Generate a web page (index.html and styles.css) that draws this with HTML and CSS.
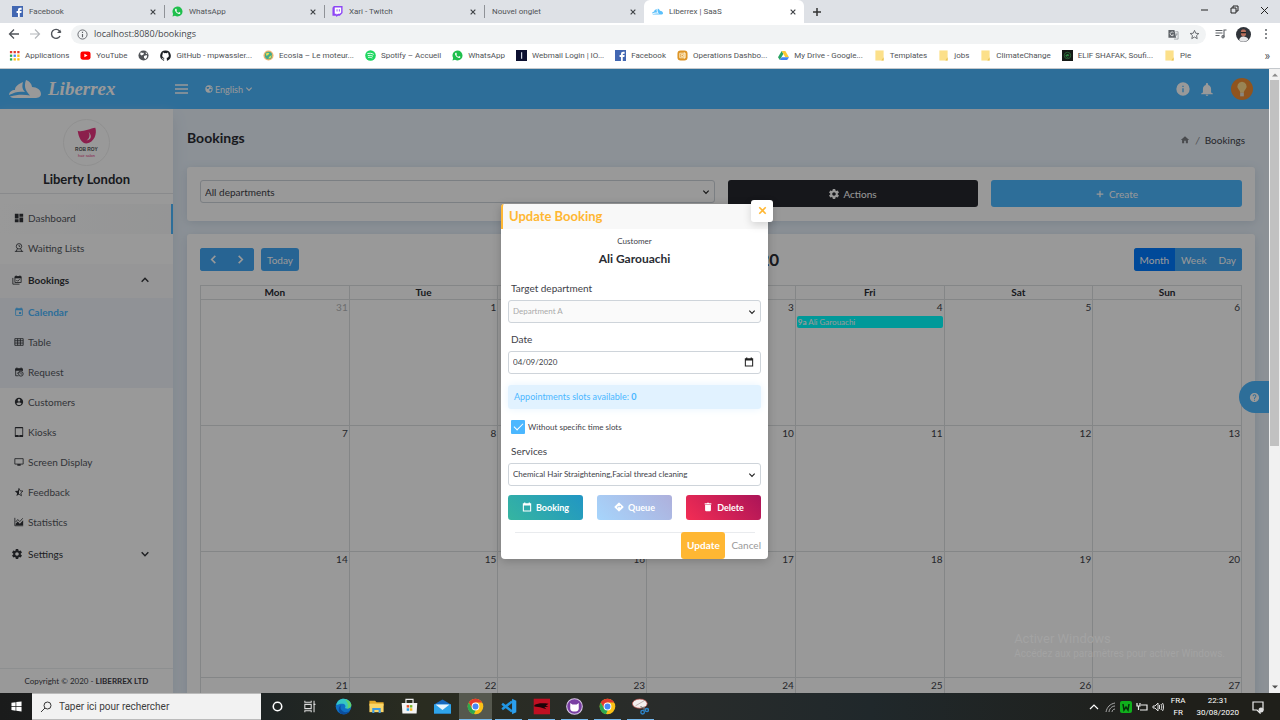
FILE: index.html
```html
<!DOCTYPE html>
<html lang="en">
<head>
<meta charset="utf-8">
<title>Liberrex | SaaS</title>
<link rel="stylesheet" href="styles.css">
</head>
<body>
<svg class="sprite" aria-hidden="true">
  <symbol id="i-x" viewBox="0 0 24 24"><path d="M5 5l14 14M19 5L5 19" fill="none" stroke="currentColor" stroke-width="3.500"/></symbol>
  <symbol id="i-facebook" viewBox="0 0 24 24"><path fill="#4267b2" d="M0 0h24v24H0z"/><path fill="#fff" d="M13 24v-9h-3v-4h3V9c0-3.500 2-5 5-5h3v4h-2c-1.500 0-2 .5-2 1.500V11h4l-.6 4H17v9z"/></symbol>
  <symbol id="i-whatsapp" viewBox="0 0 24 24"><path fill="#1fbf4c" d="M12 1a11 11 0 0 1 0 22c-2 0-4-.5-5.500-1.500L1 23l1.500-5.500A11 11 0 0 1 12 1z"/><path fill="#fff" d="M8 6c-2 1.500-1.600 4 .2 6.700 2 3 5.200 5.200 8 4.800 1.500-.3 2.300-1.500 2.100-2.600l-3-1.600-1.500 1.700c-2-.7-3.600-2.300-4.300-4l1.200-1.600L9.500 6z"/></symbol>
  <symbol id="i-cloud" viewBox="0 0 32 20"><path fill="currentColor" d="M0 16c0-3 3-5 6-5 0-4 4-6 8-8-1 4-1 7 2 10-6-1-10 0-16 3zM17 1c3 1 6 4 6 7 5 0 9 3 9 7 0 3-3 4-6 4H6c-2 0-4-.500-5-1.500 7-2 14-2 20-1-3-3-7-8-4-15.500z"/></symbol>
  <symbol id="i-folder" viewBox="0 0 24 24"><path fill="#fce08a" d="M3 1h18v22H3z"/><path fill="#e9c354" d="M16 23l5-7v7z"/></symbol>
  <symbol id="i-globe" viewBox="0 0 24 24"><circle cx="12" cy="12" r="11" fill="currentColor"/><path class="cut" d="M5 6c3-1 5 1 8 0l-1 4-4 2-3-2zM13 13l6-2 1 4-4 5-3-3zM17 4l4 5-4-1z"/></symbol>
  <symbol id="i-info" viewBox="0 0 24 24"><path fill="currentColor" d="M12 2a10 10 0 1 0 0 20 10 10 0 0 0 0-20zm1 15h-2v-6h2zm0-8h-2V7h2z"/></symbol>
  <symbol id="i-chrome" viewBox="0 0 24 24"><circle cx="12" cy="12" r="11" fill="#fbc116"/><path fill="#e33b2e" d="M2.500 6.500A11 11 0 0 1 21.500 6.500H12l-5 8z"/><path fill="#2da94f" d="M2.500 6.500L7.300 15l5.200 2-2.700 6A11 11 0 0 1 2.500 6.500z"/><circle cx="12" cy="12" r="5.500" fill="#fff"/><circle cx="12" cy="12" r="4.200" fill="#4687f4"/></symbol>
  <symbol id="i-chev" viewBox="0 0 24 24"><path d="M4 8l8 8 8-8" fill="none" stroke="currentColor" stroke-width="3.500"/></symbol>
  <symbol id="i-dashboard" viewBox="0 0 24 24"><path fill="currentColor" d="M2 13h9V2H2v11zm0 9h9v-7H2v7zm11 0h9V11h-9v11zm0-20v7h9V2h-9z"/></symbol>
  <symbol id="i-waiting" viewBox="0 0 24 24"><g fill="none" stroke="currentColor" stroke-width="2"><circle cx="12" cy="8" r="6.500"/><path d="M12 5v3h3M8 14l-3 7M16 14l3 7M2 20h20"/></g></symbol>
  <symbol id="i-books" viewBox="0 0 24 24"><path d="M7 4h15v14H7zM2 7v15h16M10 1v3M19 1v3M10.500 12l3 3 5-5" fill="none" stroke="currentColor" stroke-width="2"/><path fill="currentColor" d="M7 3h15v5H7z"/></symbol>
  <symbol id="i-event" viewBox="0 0 24 24"><path fill="currentColor" d="M17 12h-5v5h5v-5zM16 1v2H8V1H6v2H5c-1.110 0-1.990.9-1.990 2L3 19c0 1.100.89 2 2 2h14c1.100 0 2-.9 2-2V5c0-1.100-.9-2-2-2h-1V1h-2zm3 18H5V8h14v11z"/></symbol>
  <symbol id="i-table" viewBox="0 0 24 24"><path d="M2 4h20v16H2zM2 9h20M2 14.500h20M8.700 4v16M15.300 4v16" fill="none" stroke="currentColor" stroke-width="2"/></symbol>
  <symbol id="i-request" viewBox="0 0 24 24"><path d="M11 21H4V4h16v6M7 1v4M17 1v4M7 16l7-6" fill="none" stroke="currentColor" stroke-width="2"/><path fill="currentColor" d="M3 4h18v5H3z"/><circle cx="16.500" cy="16.500" r="5.500" fill="none" stroke="currentColor" stroke-width="2"/><path d="M16.500 13v4h3" fill="none" stroke="currentColor" stroke-width="1.500"/></symbol>
  <symbol id="i-user" viewBox="0 0 24 24"><path fill="currentColor" d="M12 2C6.480 2 2 6.480 2 12s4.480 10 10 10 10-4.480 10-10S17.520 2 12 2zm0 3c1.660 0 3 1.340 3 3s-1.340 3-3 3-3-1.340-3-3 1.340-3 3-3zm0 14.200c-2.500 0-4.710-1.280-6-3.220.03-1.990 4-3.080 6-3.080 1.990 0 5.970 1.090 6 3.080-1.290 1.940-3.500 3.220-6 3.220z"/></symbol>
  <symbol id="i-tablet" viewBox="0 0 24 24"><path fill="currentColor" fill-rule="evenodd" d="M4 0h16a2 2 0 0 1 2 2v20a2 2 0 0 1-2 2H4a2 2 0 0 1-2-2V2a2 2 0 0 1 2-2zm0 3v16h16V3zm6.500 17.500v1.500h3v-1.500z"/></symbol>
  <symbol id="i-screen" viewBox="0 0 24 24"><path d="M2 4h20v13H2z" fill="none" stroke="currentColor" stroke-width="2"/><path fill="currentColor" d="M8 17h8v4H8z"/></symbol>
  <symbol id="i-star" viewBox="0 0 24 24"><path d="M12 3l2.700 6.200 6.800.6-5.100 4.500 1.500 6.700-5.900-3.500" fill="none" stroke="currentColor" stroke-width="2"/><path fill="currentColor" d="M12 2v16l-6.200 3.700 1.700-7L2 9.800l7.200-.6z"/></symbol>
  <symbol id="i-stats" viewBox="0 0 24 24"><path d="M2 2v19h20M4 12l5-6 5 5 7-8" fill="none" stroke="currentColor" stroke-width="2"/><path fill="currentColor" d="M4 20v-4l5-5 5 5 8-8v12z"/></symbol>
  <symbol id="i-gear" viewBox="2 2 20 20"><path fill="currentColor" d="M19.430 12.980c.04-.32.07-.64.07-.98s-.03-.66-.07-.98l2.110-1.650c.19-.15.24-.42.12-.64l-2-3.460c-.12-.22-.39-.3-.61-.22l-2.490 1c-.52-.4-1.080-.73-1.690-.98l-.38-2.650C14.460 2.180 14.250 2 14 2h-4c-.25 0-.46.18-.49.42l-.38 2.650c-.61.25-1.170.59-1.690.98l-2.490-1c-.23-.09-.49 0-.61.22l-2 3.460c-.13.22-.07.49.12.64l2.110 1.650c-.04.32-.07.65-.07.98s.03.66.07.98l-2.110 1.650c-.19.15-.24.42-.12.64l2 3.460c.12.22.39.3.61.22l2.490-1c.52.4 1.080.73 1.690.98l.38 2.650c.03.24.24.42.49.42h4c.25 0 .46-.18.49-.42l.38-2.650c.61-.25 1.170-.59 1.690-.98l2.490 1c.23.09.49 0 .61-.22l2-3.460c.12-.22.07-.49-.12-.64l-2.110-1.650zM12 15.500c-1.930 0-3.500-1.570-3.500-3.500s1.570-3.500 3.500-3.500 3.500 1.570 3.500 3.500-1.570 3.500-3.500 3.500z"/></symbol>
  <symbol id="i-plus" viewBox="0 0 24 24"><path d="M12 4v16M4 12h16" fill="none" stroke="currentColor" stroke-width="3"/></symbol>
  <symbol id="i-home" viewBox="0 0 24 24"><path fill="currentColor" d="M10 20v-6h4v6h5v-8h3L12 3 2 12h3v8z"/></symbol>
  <symbol id="i-bell" viewBox="0 0 24 24"><path fill="currentColor" d="M12 23c1.300 0 2.300-.9 2.300-2H9.700c0 1.100 1 2 2.300 2zm7-6v-6c0-3.400-2-6-5-6.800V3a2 2 0 0 0-4 0v1.200C7 5 5 7.600 5 11v6l-3 2v1h20v-1z"/></symbol>
  <symbol id="i-help" viewBox="0 0 24 24"><path fill="currentColor" d="M12 2C6.480 2 2 6.480 2 12s4.480 10 10 10 10-4.480 10-10S17.520 2 12 2zm1 17h-2v-2h2v2zm2.070-7.750l-.9.920C13.450 12.900 13 13.500 13 15h-2v-.5c0-1.100.45-2.100 1.170-2.830l1.240-1.260c.37-.36.59-.86.59-1.410 0-1.100-.9-2-2-2s-2 .9-2 2H8c0-2.210 1.790-4 4-4s4 1.790 4 4c0 .88-.36 1.680-.93 2.250z"/></symbol>
  <symbol id="i-cal" viewBox="0 0 24 24"><path fill="currentColor" fill-rule="evenodd" d="M5 1h3v2h8V1h3v2h3v20H2V3h3zM4.500 8.500v12h15v-12z"/></symbol>
  <symbol id="i-queue" viewBox="0 0 24 24"><path fill="currentColor" d="M22.400 10.900L13.100 1.600a1.500 1.500 0 0 0-2.200 0l-9.300 9.300a1.500 1.500 0 0 0 0 2.200l9.300 9.300a1.500 1.500 0 0 0 2.200 0l9.300-9.300a1.500 1.500 0 0 0 0-2.200zM14 14.500V12h-4v3H8v-4a1 1 0 0 1 1-1h5V7.500l3.500 3.500z"/></symbol>
  <symbol id="i-trash" viewBox="0 0 24 24"><path fill="currentColor" d="M5 7h14v13a2 2 0 0 1-2 2H7a2 2 0 0 1-2-2zM4 3h5l1-1h4l1 1h5v3H4z"/></symbol>
</svg>

<header class="browser">
  <div class="tabs">
    <div class="tab"><svg class="ic11"><use href="#i-facebook"/></svg><span>Facebook</span><button aria-label="Close tab"><svg><use href="#i-x"/></svg></button></div>
    <div class="tab"><svg class="ic11"><use href="#i-whatsapp"/></svg><span>WhatsApp</span><button aria-label="Close tab"><svg><use href="#i-x"/></svg></button></div>
    <div class="tab"><svg class="ic11" viewBox="0 0 24 24"><path fill="#8d45f5" d="M4 0h19v15l-6 6h-4l-4 3v-3H1V4z"/><path fill="#fff" d="M6 3h14v11l-3 3h-4l-3 2v-2H6z"/><path stroke="#8d45f5" stroke-width="2" d="M11 7v5M16 7v5"/></svg><span>Xari - Twitch</span><button aria-label="Close tab"><svg><use href="#i-x"/></svg></button></div>
    <div class="tab last"><span>Nouvel onglet</span><button aria-label="Close tab"><svg><use href="#i-x"/></svg></button></div>
    <div class="tab active"><svg class="ic11 sky"><use href="#i-cloud"/></svg><span>Liberrex | SaaS</span><button aria-label="Close tab"><svg><use href="#i-x"/></svg></button></div>
    <button class="newtab" aria-label="New tab"><svg><use href="#i-plus"/></svg></button>
    <div class="winbtns">
      <svg viewBox="0 0 12 12"><path d="M3 6h7" stroke="#222" stroke-width="1"/></svg>
      <svg viewBox="0 0 12 12" fill="none" stroke="#222" stroke-width="1"><path d="M3 4h5v5H3zM5 4V2h5v5H8"/></svg>
      <svg viewBox="0 0 12 12"><path d="M3 3l7 7M10 3l-7 7" stroke="#222" stroke-width="1"/></svg>
    </div>
  </div>
  <div class="address">
    <svg class="ic12" viewBox="0 0 24 24" fill="none" stroke="#50545a" stroke-width="2.600"><path d="M22 12H4M12 3l-9 9 9 9"/></svg>
    <svg class="ic12" viewBox="0 0 24 24" fill="none" stroke="#b4b7bb" stroke-width="2.400"><path d="M2 12h18M12 3l9 9-9 9"/></svg>
    <svg class="ic12" viewBox="0 0 24 24" fill="none" stroke="#50545a" stroke-width="2.800"><path d="M20 16a9 9 0 1 1-1-10l3 3"/><path fill="#50545a" d="M21 3v7h-7z" stroke="none"/></svg>
    <div class="omnibox">
      <svg class="ic11" viewBox="0 0 24 24" fill="none" stroke="#5f6368" stroke-width="2"><circle cx="12" cy="12" r="10"/><path d="M12 6v2.500M12 11v7" stroke-width="2.500"/></svg>
      <input type="text" aria-label="Address" value="localhost:8080/bookings">
      <svg class="ic11" viewBox="0 0 24 24"><path fill="#5f6368" d="M1 2h13l4 17H1z"/><path fill="none" stroke="#85898e" stroke-width="1.500" d="M16 6h6v16h-9M17 11h4M19 10c0 4-2 6-4 7"/><path fill="none" stroke="#fff" stroke-width="1.500" d="M12 8a4 4 0 1 0 0 5H9"/></svg>
      <svg class="ic11" viewBox="0 0 24 24"><path fill="none" stroke="#5f6368" stroke-width="2" d="M12 3l2.700 6.300 6.800.6-5.100 4.500 1.500 6.700L12 17.500 6.100 21l1.500-6.700-5.100-4.500 6.800-.6z"/></svg>
    </div>
    <svg class="ic12" viewBox="0 0 24 24" fill="none" stroke="#5f6368" stroke-width="2.200"><path d="M1 5h14M1 10h14M1 15h8M18 18V4h5"/><circle cx="16" cy="17.500" r="2.200"/></svg>
    <svg class="avatar" viewBox="0 0 24 24"><circle cx="12" cy="12" r="12" fill="#30343a"/><path fill="#b86f5c" d="M8 6c1-3 8-3 8 1v5c-1 4-7 4-8 0z"/><path fill="#e6e6e8" d="M5 21c1-5 4-6 7-6s6 1 8 5a12 12 0 0 1-15 1z"/><path fill="#222" d="M8 8h8v2H8z"/></svg>
    <svg class="ic12" viewBox="0 0 24 24" fill="#5f6368"><circle cx="12" cy="4" r="2"/><circle cx="12" cy="12" r="2"/><circle cx="12" cy="20" r="2"/></svg>
  </div>
  <nav class="bookmarks">
    <a href="#"><svg class="ic11" viewBox="0 0 24 24"><path fill="#e33b2e" d="M2 2h5v5H2zM10 2h5v5h-5zM18 2h5v5h-5z"/><path fill="#2da94f" d="M2 10h5v5H2z"/><path fill="#4687f4" d="M10 10h5v5h-5z"/><path fill="#fbc116" d="M18 10h5v5h-5zM10 18h5v5h-5zM18 18h5v5h-5z"/><path fill="#2da94f" d="M2 18h5v5H2z"/></svg>Applications</a>
    <a href="#"><svg class="ic11" viewBox="0 0 24 24"><rect y="3" x="1" width="22" height="18" rx="5" fill="#f00"/><path fill="#fff" d="M9.500 8v8l7-4z"/></svg>YouTube</a>
    <a href="#" aria-label="Site"><svg class="ic11"><use href="#i-globe"/></svg></a>
    <a href="#"><svg class="ic11" viewBox="0 0 24 24"><path fill="#1b1f23" d="M12 1a11.500 11.500 0 0 0-4 22.300c.6.100 1-.2 1-.6v-2c-4 .8-4.500-2-5-2.700-.3-.5-1-1.200 0-1.200 1.200 0 2 2 3 2.200.8.200 1.600 0 2-.2.100-.6.500-1.200.9-1.500-3-.5-5-1.700-5-5.500 0-1.300.5-2.400 1.200-3.200-.2-.8-.2-2 .2-3 1.500 0 2.700 1 3 1.300a12 12 0 0 1 5.400 0c.5-.4 1.700-1.300 3-1.300.5 1 .5 2.200.3 3 .7.800 1.200 1.900 1.200 3.200 0 4-2.200 5-5 5.500.6.500.8 1.400.8 2.500v3c0 .3.400.6 1 .5A11.500 11.500 0 0 0 12 1z"/></svg>GitHub - mpwassler...</a>
    <a href="#"><svg class="ic11" viewBox="0 0 24 24"><circle cx="12" cy="12" r="11" fill="#efb26d"/><circle cx="12" cy="12" r="8" fill="#42a98d"/><path fill="#e7df4e" d="M6 8c4-3 7-2 8 0l-6 5zM13 15l6-4-2 6-5 2z"/></svg>Ecosia – Le moteur...</a>
    <a href="#"><svg class="ic11" viewBox="0 0 24 24"><circle cx="12" cy="12" r="11.500" fill="#1ed760"/><path d="M5 8c5-1.500 10-1 14 1.500M6 12.500c4-1.200 8-.8 11.500 1.200M7 16.500c3-1 6-.6 9 1" fill="none" stroke="#fff" stroke-width="2"/></svg>Spotify – Accueil</a>
    <a href="#"><svg class="ic11"><use href="#i-whatsapp"/></svg>WhatsApp</a>
    <a href="#"><svg class="ic11" viewBox="0 0 24 24"><path fill="#0c1030" d="M0 0h24v24H0z"/><path fill="#d8deea" d="M11 5h2.500v14H11z"/></svg>Webmail Login | IO...</a>
    <a href="#"><svg class="ic11"><use href="#i-facebook"/></svg>Facebook</a>
    <a href="#"><svg class="ic11" viewBox="0 0 24 24"><rect x="1" y="1" width="22" height="22" rx="7" fill="#dd9426"/><path d="M6 7h12v10H6zM9 10h5v4H9zM16 5v14" fill="none" stroke="#fff3d5" stroke-width="1.800"/></svg>Operations Dashbo...</a>
    <a href="#"><svg class="ic11" viewBox="0 0 24 24"><path fill="#29a463" d="M8 2L0 16l4 6 8-14z"/><path fill="#fcc934" d="M8 2h8l8 14h-8z"/><path fill="#4285f4" d="M4 22l4-6h16l-4 6z"/></svg>My Drive - Google...</a>
    <a href="#"><svg class="ic11"><use href="#i-folder"/></svg>Templates</a>
    <a href="#"><svg class="ic11"><use href="#i-folder"/></svg>jobs</a>
    <a href="#"><svg class="ic11"><use href="#i-folder"/></svg>ClimateChange</a>
    <a href="#"><svg class="ic11" viewBox="0 0 24 24"><path fill="#151a17" d="M0 0h24v24H0z"/><circle cx="12" cy="12" r="7" fill="none" stroke="#2c6b3a" stroke-width="2"/><path d="M8 12h7a3 3 0 1 0-1 3" fill="none" stroke="#2f8c45" stroke-width="2"/></svg>ELIF SHAFAK, Soufi...</a>
    <a href="#"><svg class="ic11"><use href="#i-folder"/></svg>Pie</a>
    <button class="more" aria-label="More bookmarks">»</button>
  </nav>
</header>

<div class="viewport">
  <div class="page">
    <header class="topbar">
      <a class="brand" href="#"><svg><use href="#i-cloud"/></svg><span>Liberrex</span></a>
      <button class="burger" aria-label="Menu"><svg viewBox="0 0 13 10"><path d="M0 1h13M0 5h13M0 9h13" stroke="currentColor" stroke-width="1.400"/></svg></button>
      <button class="lang"><svg class="ic8"><use href="#i-globe"/></svg>English<svg class="ic8"><use href="#i-chev"/></svg></button>
      <div class="topright">
        <button aria-label="Information"><svg class="ic16"><use href="#i-info"/></svg></button>
        <button aria-label="Notifications"><svg class="bell"><use href="#i-bell"/></svg></button>
        <button aria-label="Account"><svg class="bulb" viewBox="0 0 24 24"><circle cx="12" cy="12" r="12" fill="#f08c32"/><path fill="#ffdc8c" d="M12 4a5 5 0 0 0-4 8c1 1.500 2 2.500 2 4h4c0-1.500 1-2.500 2-4a5 5 0 0 0-4-8z"/><path fill="#e8e0d0" d="M10 16h4v4h-4z"/></svg></button>
      </div>
    </header>
    <div class="columns">
      <aside class="sidebar">
        <div class="profile">
          <svg class="salon" viewBox="0 0 48 48"><circle cx="24" cy="24" r="23.500" fill="#fff" stroke="#efefef"/><path fill="#e8357f" d="M15 12c4 2 12-2 18-3 2 6-1 15-9 16-5 0-8-6-9-13z"/><path fill="#fff" d="M26 13c2 3 1 7-2 9 5-1 6-5 2-9z"/><text x="24" y="33" text-anchor="middle" class="salon-a">ROB ROY</text><text x="24" y="39" text-anchor="middle" class="salon-b">hair salon</text></svg>
          <h2>Liberty London</h2>
        </div>
        <nav class="menu">
          <a class="hover" href="#"><svg><use href="#i-dashboard"/></svg>Dashboard</a>
          <a href="#"><svg><use href="#i-waiting"/></svg>Waiting Lists</a>
          <button class="group open"><svg><use href="#i-books"/></svg>Bookings<svg class="arrow up"><use href="#i-chev"/></svg></button>
          <div class="sub">
            <a class="current" href="#"><svg><use href="#i-event"/></svg>Calendar</a>
            <a href="#"><svg><use href="#i-table"/></svg>Table</a>
            <a href="#"><svg><use href="#i-request"/></svg>Request</a>
          </div>
          <a href="#"><svg><use href="#i-user"/></svg>Customers</a>
          <a href="#"><svg><use href="#i-tablet"/></svg>Kiosks</a>
          <a href="#"><svg><use href="#i-screen"/></svg>Screen Display</a>
          <a href="#"><svg><use href="#i-star"/></svg>Feedback</a>
          <a href="#"><svg><use href="#i-stats"/></svg>Statistics</a>
          <button class="group"><svg><use href="#i-gear"/></svg>Settings<svg class="arrow"><use href="#i-chev"/></svg></button>
        </nav>
        <footer>Copyright © 2020 - <b>LIBERREX LTD</b></footer>
      </aside>
      <main>
        <div class="heading">
          <h1>Bookings</h1>
          <nav class="crumbs"><a href="#" aria-label="Home"><svg><use href="#i-home"/></svg></a><i>/</i><span>Bookings</span></nav>
        </div>
        <section class="card filters">
          <div class="select"><select aria-label="Department filter"><option>All departments</option></select><svg><use href="#i-chev"/></svg></div>
          <button class="dark"><svg><use href="#i-gear"/></svg>Actions</button>
          <button class="blue"><svg><use href="#i-plus"/></svg>Create</button>
        </section>
        <section class="card calendar">
          <div class="toolbar">
            <div class="left">
              <div class="seg"><button aria-label="Previous"><svg class="prev"><use href="#i-chev"/></svg></button><button aria-label="Next"><svg class="next"><use href="#i-chev"/></svg></button></div>
              <div class="seg"><button>Today</button></div>
            </div>
            <h2>September 2020</h2>
            <div class="seg"><button class="on">Month</button><button>Week</button><button>Day</button></div>
          </div>
          <table>
            <thead><tr><th>Mon</th><th>Tue</th><th>Wed</th><th>Thu</th><th>Fri</th><th>Sat</th><th>Sun</th></tr></thead>
            <tbody>
              <tr><td class="other">31</td><td>1</td><td>2</td><td>3</td><td>4<a class="event" href="#"><b>9a</b> Ali Garouachi</a></td><td>5</td><td>6</td></tr>
              <tr><td>7</td><td>8</td><td>9</td><td>10</td><td>11</td><td>12</td><td>13</td></tr>
              <tr><td>14</td><td>15</td><td>16</td><td>17</td><td>18</td><td>19</td><td>20</td></tr>
              <tr><td>21</td><td>22</td><td>23</td><td>24</td><td>25</td><td>26</td><td>27</td></tr>
            </tbody>
          </table>
        </section>
      </main>
    </div>
    <button class="helpbtn" aria-label="Help"><svg><use href="#i-help"/></svg></button>
    <div class="backdrop">
      <form class="modal" role="dialog" aria-labelledby="dlg">
        <button type="button" class="close" aria-label="Close"><svg><use href="#i-x"/></svg></button>
        <h2 id="dlg">Update Booking</h2>
        <div class="body">
          <div class="customer"><small>Customer</small><strong>Ali Garouachi</strong></div>
          <label for="dept">Target department</label>
          <div class="select off"><select id="dept" disabled><option>Department A</option></select><svg><use href="#i-chev"/></svg></div>
          <label for="date">Date</label>
          <div class="select date"><input id="date" type="text" value="04/09/2020"><svg><use href="#i-cal"/></svg></div>
          <p class="slots">Appointments slots available: <b>0</b></p>
          <label class="check"><input type="checkbox" checked>Without specific time slots</label>
          <label for="svc">Services</label>
          <div class="select"><select id="svc"><option>Chemical Hair Straightening,Facial thread cleaning</option></select><svg><use href="#i-chev"/></svg></div>
          <div class="actions">
            <button type="button" class="teal"><svg><use href="#i-cal"/></svg>Booking</button>
            <button type="button" class="lilac"><svg><use href="#i-queue"/></svg>Queue</button>
            <button type="button" class="red"><svg><use href="#i-trash"/></svg>Delete</button>
          </div>
          <div class="foot"><button class="update">Update</button><button type="button" class="cancel">Cancel</button></div>
        </div>
      </form>
    </div>
    <div class="watermark"><strong>Activer Windows</strong><span>Accédez aux paramètres pour activer Windows.</span></div>
  </div>
  <div class="scrollbar"><svg viewBox="0 0 10 10"><path d="M2 7l3-3 3 3z" fill="#8a8a8a"/></svg><i></i><svg viewBox="0 0 10 10"><path d="M2 3l3 3 3-3z" fill="#505050"/></svg></div>
</div>

<footer class="taskbar">
  <button class="start" aria-label="Start"><svg viewBox="0 0 24 24" fill="#fff"><path d="M1 4l9-1.500V11H1zM11.500 2.300L23 1v10H11.500zM1 12.500h9V21l-9-1.500zM11.500 12.500H23V23l-11.500-1.500z"/></svg></button>
  <label class="search"><svg viewBox="0 0 24 24" fill="none" stroke="#222" stroke-width="1.800"><circle cx="15" cy="9" r="7"/><path d="M10 14l-8 8"/></svg><input type="text" placeholder="Taper ici pour rechercher"></label>
  <div class="apps">
    <button aria-label="Cortana"><svg viewBox="0 0 24 24"><circle cx="12" cy="12" r="6" fill="none" stroke="#fff" stroke-width="2.200"/></svg></button>
    <button aria-label="Task view"><svg viewBox="0 0 24 24" fill="none" stroke="#ddd" stroke-width="1.500"><path d="M4 4v2h9V4M4 20v-2h9v2M4 9h9v6H4zM17 4v16M16 9h3"/></svg></button>
    <button aria-label="Edge"><svg viewBox="0 0 24 24"><circle cx="12" cy="12" r="11" fill="#0f70c4"/><path fill="#35c6c4" d="M2 10C3 4 7 1 12 1c7 0 11 5 11 9 0 5-6 6-9 4 2-3 0-6-4-6-3 0-6 1-8 2z"/><path fill="#61d16c" d="M14 2c6 1 9 5 9 8s-2 5-6 5c3-5 0-10-3-13z"/><path fill="#0b4e9e" d="M9 10c-3 4 0 10 6 10 2 0 4-.5 6-2-3 5-8 6-12 4.500C4 20 4 12 9 10z"/></svg></button>
    <button aria-label="Explorer"><svg viewBox="0 0 24 24"><path fill="#e5a928" d="M2 4h8l2 2h10v5H2z"/><path fill="#fbd667" d="M2 8h20v12H2z"/><path fill="#3f9be0" d="M6 21v-7h12v7h-3v-4H9v4z"/></svg></button>
    <button aria-label="Store"><svg viewBox="0 0 24 24"><path fill="#f4f4f4" d="M1 7h22l-1 15H2z"/><path d="M7 7V2h10v5" fill="none" stroke="#eee" stroke-width="1.600"/><path fill="#e8512c" d="M8 10h3.500v3.500H8z"/><path fill="#78b72a" d="M12.500 10H16v3.500h-3.500z"/><path fill="#2aa0e8" d="M8 14.500h3.500V18H8z"/><path fill="#f6b71c" d="M12.500 14.500H16V18h-3.500z"/></svg></button>
    <button aria-label="Mail"><svg viewBox="0 0 24 24"><path fill="#1769c0" d="M0 9l12-7 12 7v13H0z"/><path fill="#2fa4ea" d="M0 9h24v13H0z"/><path fill="#e8f4fd" d="M2 9h20l-10 8z"/></svg></button>
    <button class="run front" aria-label="Chrome"><svg><use href="#i-chrome"/></svg></button>
    <button class="run" aria-label="Code"><svg viewBox="0 0 24 24"><path d="M17 5L3 16M3 8l14 11" stroke="#2196e3" stroke-width="3.500"/><path fill="#2b9fee" d="M17 1l6 3v16l-6 3z"/></svg></button>
    <button class="run" aria-label="Red app"><svg viewBox="0 0 24 24"><path fill="#c00f22" d="M1 1h23v22H1z"/><path fill="#1c0408" d="M2 10c5-3 11-3 20-2l-4 3 4 1-6 1 3 3-9-3-8-1z"/></svg></button>
    <button class="run" aria-label="GitHub"><svg viewBox="0 0 24 24"><circle cx="12" cy="12" r="11" fill="#7a3fa3" stroke="#d8c8e6" stroke-width="1.500"/><path fill="#fff" d="M6 7l3 2h6l3-2v8c0 3-3 4-6 4s-6-1-6-4z"/></svg></button>
    <button class="run" aria-label="Chrome"><svg><use href="#i-chrome"/></svg></button>
    <button class="run" aria-label="Snip"><svg viewBox="0 0 24 24"><ellipse cx="11" cy="8" rx="10.500" ry="6.500" fill="#f3efee" stroke="#b5443f"/><path d="M5 11l12-7" stroke="#a99"/><path d="M12 12l6 3M17 12v6" stroke="#777" stroke-width="1.500"/><g fill="none" stroke="#2d83c8" stroke-width="2"><circle cx="15" cy="20" r="2.500"/><circle cx="21" cy="17" r="2.200"/></g></svg></button>
  </div>
  <div class="tray">
    <svg viewBox="0 0 12 12" fill="none" stroke="#fff" stroke-width="1.200"><path d="M2 8l4-4 4 4"/></svg>
    <svg viewBox="0 0 12 12" fill="none" stroke="#aaa"><path d="M2 11C3 6 6 3 11 2M5 11c0-3 3-6 6-6M8 11c0-1 1-3 3-3"/></svg>
    <svg viewBox="0 0 12 12"><rect width="12" height="12" rx="2" fill="#10b01c"/><path d="M3 3l1 6 2-3 2 3 1-6" fill="none" stroke="#06300a" stroke-width="1.500"/></svg>
    <svg viewBox="0 0 12 12" fill="none" stroke="#eee" stroke-width="1.200"><path d="M5 4h6v5H4M1 2v3h3V2M2.500 5v4"/></svg>
    <svg viewBox="0 0 12 12" fill="none" stroke="#ddd"><path d="M1 5h2l3-3v8L3 7H1zM7.500 4v4M9 3c1 2 1 4 0 6M10.500 2c1.500 3 1.500 5 0 8"/></svg>
    <div class="stack">FRA<br>FR</div>
    <div class="stack clock">22:31<br>30/08/2020</div>
    <svg class="note" viewBox="0 0 14 14"><path d="M2 2h10v8H9v3L6 10H2z" fill="none" stroke="#eee" stroke-width="1.200"/><circle cx="10" cy="10" r="2.500" fill="#ddd"/></svg>
  </div>
</footer>
</body>
</html>
```
FILE: styles.css
```css
* { box-sizing: border-box; margin: 0; }
body { height: 100vh; display: flex; flex-direction: column; overflow: hidden; font-family: Lato, "Noto Sans", sans-serif; font-size: 10px; color: #3e4148; background: #fff; }
button, input, select { font: inherit; color: inherit; border: 0; padding: 0; background: none; min-width: 0; }
a { color: inherit; text-decoration: none; }
svg { flex: none; display: block; }
.sprite { display: none; }
.cut { fill: var(--cut, #fff); }
.ic8 { width: 8px; height: 8px; }
.ic11 { width: 11px; height: 11px; }
.ic12 { width: 12px; height: 12px; }
.ic16 { width: 16px; height: 16px; }
.sky { color: #5bc0fb; }

/* Browser window */
.browser { flex: none; font: 8px/12px Roboto, "Noto Sans", sans-serif; color: #505357; border-bottom: 1px solid #c4c8cc; }
.tabs { height: 23px; display: flex; align-items: stretch; padding-left: 4px; background: #dee1e6; }
.tab { flex: 0 1 160px; display: flex; align-items: center; gap: 6px; padding: 0 7px 0 8px; position: relative; }
.tab::after { content: ""; position: absolute; right: -1px; top: 5px; bottom: 5px; width: 1px; background: #8f9297; }
.tab.last::after, .tab.active::after { display: none; }
.tab.active { background: #fff; border-radius: 6px 6px 0 0; }
.tab span { flex: 1; white-space: nowrap; }
.tab button svg { width: 8px; height: 8px; color: #404347; }
.newtab { margin-left: 7px; color: #333; }
.newtab svg { width: 12px; height: 12px; }
.winbtns { margin-left: auto; display: flex; gap: 18px; align-items: center; padding: 0 10px 4px 0; }
.winbtns svg { width: 12px; height: 12px; }
.address { height: 22px; display: flex; align-items: center; gap: 9px; padding: 0 8px; }
.omnibox { flex: 1; height: 19px; display: flex; align-items: center; gap: 10px; padding: 0 6px; border-radius: 10px; background: #f1f3f4; }
.omnibox input { flex: 1; font: 9px/12px "Open Sans", "Noto Sans", sans-serif; margin-left: -4px; color: #45484c; outline: 0; }
.avatar { width: 15px; height: 15px; }
.bookmarks { height: 23px; display: flex; align-items: center; gap: 11px; padding: 0 10px 2px 9px; }
.bookmarks a { display: flex; align-items: center; gap: 5px; white-space: nowrap; }
.more { margin-left: auto; font-size: 12px; }

/* Web page */
.viewport { flex: 1; min-height: 0; display: flex; }
.page { flex: 1; min-width: 0; position: relative; display: flex; flex-direction: column; overflow: hidden; background: #e9f2fb; }
.topbar { flex: none; height: 40px; display: flex; align-items: center; padding: 0 16px 0 9px; background: #4bb7ff; color: #fff; }
.brand { width: 166px; display: flex; align-items: center; gap: 7px; }
.brand svg { width: 32px; height: 20px; }
.brand span { font: italic bold 19px/24px "Liberation Serif", serif; }
.burger svg { width: 13px; height: 10px; }
.lang { display: flex; align-items: center; gap: 2px; margin-left: 17px; font-size: 9px; --cut: #4bb7ff; }
.topright { margin-left: auto; display: flex; align-items: center; gap: 9px; }
.bell { width: 14px; height: 15px; margin-right: 8px; }
.bulb { width: 22px; height: 22px; }
.columns { flex: 1; min-height: 0; display: flex; }

.sidebar { width: 173px; flex: none; display: flex; flex-direction: column; background: #fff; box-shadow: 0 8px 14px #d2dde9; }
.profile { height: 85px; flex: none; display: flex; flex-direction: column; align-items: center; gap: 5px; padding-top: 10px; border-bottom: 1px solid #e4e6ea; }
.salon { width: 47px; height: 47px; }
.salon-a { font: bold 5px "Liberation Sans", sans-serif; fill: #555; }
.salon-b { font: 4px "Liberation Sans", sans-serif; fill: #e8357f; }
.profile h2 { font-size: 13px; line-height: 16px; color: #2a2c33; }
.menu { padding-top: 10px; }
.menu a, .group { height: 30px; width: 100%; display: flex; align-items: center; gap: 4px; padding: 0 14px 2px; color: #54575e; }
.menu svg { width: 10px; height: 10px; color: #33353a; }
.menu .hover { background: linear-gradient(90deg, #fff, #f8f9fa); border-right: 2px solid #4bb7ff; }
.menu .group { height: 34px; padding: 0 23px 2px 12px; gap: 6px; color: #33353a; }
.menu .group.open { font-weight: bold; background: #fbfbfc; }
.menu .arrow { margin-left: auto; }
.up { transform: rotate(180deg); }
.sub { background: #f0f4fa; }
.menu .current, .menu .current svg { color: #4bb7ff; font-weight: bold; }
.sidebar footer { margin-top: auto; height: 25px; line-height: 24px; border-top: 1px solid #eceef0; font-size: 8px; text-align: center; }

main { flex: 1; min-width: 0; padding: 0 14px; overflow: hidden; }
.heading { height: 58px; display: flex; align-items: center; justify-content: space-between; padding-right: 10px; }
h1 { font-size: 14px; line-height: 18px; color: #2a2c33; }
.crumbs { display: flex; align-items: center; gap: 5px; padding-top: 3px; }
.crumbs svg { width: 10px; height: 10px; color: #7b7d82; }
.crumbs i { color: #888; }
.card { background: #fff; border-radius: 3px; box-shadow: 0 2px 10px #cbd8e5; padding: 13px; }
.filters { display: grid; grid-template-columns: 515fr 250fr 251fr; gap: 13px; margin-bottom: 13px; padding-bottom: 14px; }
.filters button { height: 27px; display: flex; align-items: center; justify-content: center; gap: 4px; border-radius: 3px; color: #fff; }
.filters button svg { width: 10px; height: 10px; }
.dark { background: #25272e; }
.blue { background: #4bb7ff; }
.select { position: relative; display: flex; }
.select select, .select input { appearance: none; width: 100%; height: 23px; padding: 0 4px; border: 1px solid #ced4da; border-radius: 3px; background: #fff; opacity: 1; }
.select svg { position: absolute; right: 5px; top: 8px; width: 8px; height: 8px; color: #222; pointer-events: none; }

.toolbar { display: flex; align-items: center; justify-content: space-between; height: 25px; margin-bottom: 13px; }
.toolbar h2 { font-size: 17px; color: #2a2c33; }
.left { display: flex; gap: 7px; }
.seg { display: flex; height: 23px; border-radius: 3px; overflow: hidden; background: #41a7f5; }
.seg button { padding: 0 6px; color: #fff; background: #41a7f5; }
.seg .on { background: #007bff; }
.seg svg { width: 11px; height: 11px; margin: 0 2px; }
.prev { transform: rotate(90deg); }
.next { transform: rotate(-90deg); }
.left .seg button { min-width: 27px; }
table { width: 100%; table-layout: fixed; border-collapse: collapse; }
th, td { border: 1px solid #dcdfe2; padding: 0; }
th { height: 14px; line-height: 13px; color: #2a2c33; }
td { height: 126px; padding: 1px 1px; vertical-align: top; text-align: right; line-height: 12px; }
.other { color: #b5b7ba; }
.event { display: block; height: 12px; margin-top: 3px; padding-left: 1px; border-radius: 2px; background: #00ffff; color: #fff; font-size: 8px; text-align: left; }
.helpbtn { position: absolute; right: 0; top: 312px; width: 30px; height: 32px; padding-left: 10px; border-radius: 16px 0 0 16px; background: #4bb7ff; color: #fff; }
.helpbtn svg { width: 11px; height: 11px; }
.watermark { position: absolute; right: 44px; bottom: 32px; display: flex; flex-direction: column; font: 10px/14px Roboto, sans-serif; color: #a3a3a3; }
.watermark strong { font-weight: normal; font-size: 13px; line-height: 16px; }

/* Dialog */
.backdrop { position: absolute; inset: 0; display: flex; align-items: center; justify-content: center; background: rgba(0, 0, 0, .4); }
.modal { position: relative; width: 267px; border-radius: 4px; background: #fff; box-shadow: 0 2px 10px rgba(0, 0, 0, .2); }
.modal h2 { padding: 0 6px; line-height: 25px; font-size: 13px; color: #ffb733; background: #f8f8f8; border-left: 2px solid #ffb733; border-radius: 3px 0 0 0; }
.close { position: absolute; right: -5px; top: -4px; width: 22px; height: 22px; display: grid; place-items: center; border-radius: 3px; background: #fff; color: #ffb733; box-shadow: 0 3px 8px rgba(0, 0, 0, .15); }
.close svg { width: 11px; height: 11px; }
.body { padding: 6px 7px 0; display: flex; flex-direction: column; font-size: 9px; }
.customer { display: flex; flex-direction: column; align-items: center; gap: 1px; margin-bottom: 11px; }
.customer small { font-size: 8px; line-height: 12px; }
.customer strong { font-size: 12px; line-height: 22px; color: #2a2c33; }
.body label { font-size: 10px; line-height: 14px; padding-left: 3px; margin-bottom: 5px; }
.body .select { margin-bottom: 9px; font-size: 8px; }
.off select { background: #fafafa; color: #aaa; }
.body .date { margin-bottom: 11px; }
.date svg { width: 10px; height: 10px; top: 6px; right: 7px; }
.slots { height: 24px; line-height: 24px; padding-left: 6px; margin-bottom: 11px; border-radius: 3px; background: #e1f2ff; color: #4bb7ff; box-shadow: 0 0 8px #e6f4ff; }
.body .check { display: flex; align-items: center; gap: 3px; font-size: 8px; margin-bottom: 10px; }
.check input { appearance: none; width: 14px; height: 14px; border-radius: 1px; background: #4bb7ff; display: grid; place-items: center; }
.check input::after { content: ""; width: 8px; height: 4px; border: solid #fff; border-width: 0 0 1px 1px; transform: translateY(-1px) rotate(-45deg); }
.actions { display: grid; grid-template-columns: repeat(3, 1fr); gap: 14px; }
.actions button { height: 25px; display: flex; align-items: center; justify-content: center; gap: 4px; border-radius: 3px; color: #fff; font-weight: bold; }
.actions svg { width: 10px; height: 10px; }
.teal { background: linear-gradient(45deg, #36b5a0, #2196c4); }
.lilac { background: linear-gradient(45deg, #a6d5fc, #aeb0dc); }
.red { background: linear-gradient(45deg, #f32d54, #ab1458); }
.foot { display: flex; justify-content: flex-end; gap: 6px; margin-top: 12px; font-size: 10px; background: linear-gradient(#e9ebee, #e9ebee) 7px 0 / 240px 1px no-repeat; }
.update { height: 27px; width: 44px; border-radius: 3px; background: #ffb733; color: #fff; font-weight: bold; }
.cancel { color: #999; }

.scrollbar { width: 11px; flex: none; display: flex; flex-direction: column; align-items: center; background: #f1f1f1; }
.scrollbar svg { width: 10px; height: 11px; }
.scrollbar i { width: 9px; flex: 0 1 366px; background: #c1c1c1; }
.scrollbar svg:last-child { margin-top: auto; }

/* Taskbar */
.taskbar { flex: none; height: 27px; display: flex; background: linear-gradient(90deg, #1a1b1b 0, #1e2424 21%, #2a2c20 33%, #292c2b 52%, #20282b 68%, #1f1f1a 92%); color: #fff; font-family: Roboto, sans-serif; }
.start { width: 32px; display: grid; place-items: center; }
.start svg { width: 11px; height: 11px; }
.search { width: 229px; display: flex; align-items: center; gap: 7px; padding-left: 8px; background: #f2f2f2; color: #333; border: solid #bbb; border-width: 1px 0; }
.search svg { width: 12px; height: 12px; }
.search input { flex: 1; font-size: 10px; }
.search input::placeholder { color: #3d3d3d; opacity: 1; }
.apps { display: flex; }
.apps button { width: 33px; display: grid; place-items: center; }
.apps svg { width: 17px; height: 17px; }
.apps .run { background: linear-gradient(#76b9ed, #76b9ed) center bottom / 27px 1px no-repeat; }
.apps .front { background: linear-gradient(#76b9ed, #76b9ed) center bottom / 33px 1px no-repeat, #55584e; }
.tray { margin-left: auto; display: flex; align-items: center; gap: 4px; padding-right: 15px; }
.tray svg { width: 12px; height: 12px; }
.stack { font-size: 8px; line-height: 12px; text-align: center; margin-left: 3px; }
.clock { margin: 0 8px 0 7px; }
.tray .note { width: 14px; height: 14px; }
```
